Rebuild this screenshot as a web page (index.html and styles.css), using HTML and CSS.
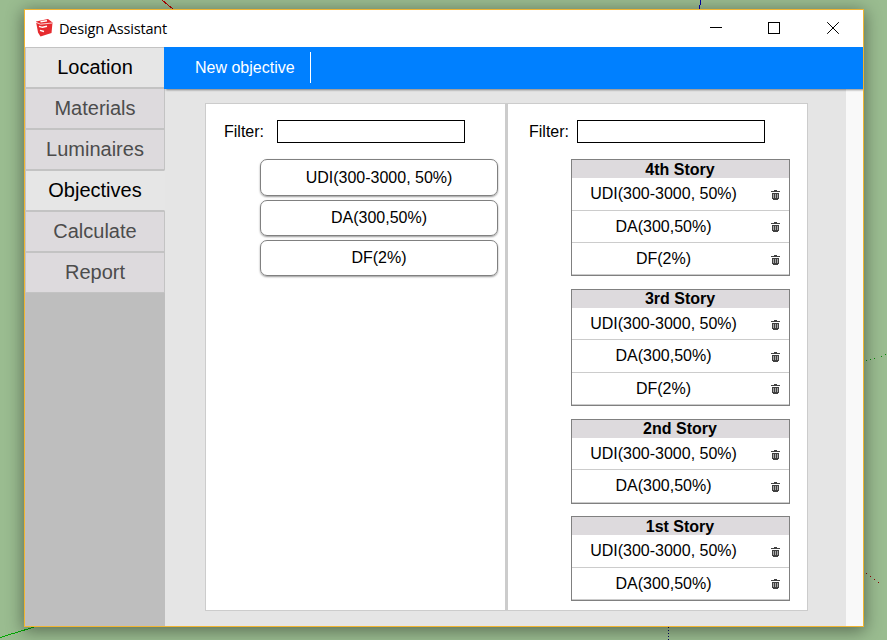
FILE: index.html
```html
<!DOCTYPE html>
<html lang="en">
<head>
<meta charset="utf-8">
<title>Design Assistant</title>
<link rel="stylesheet" href="styles.css">
</head>
<body>
<svg class="scene" width="887" height="640" viewBox="0 0 887 640" fill="none">
  <path d="M162 0 173 9" stroke="#b00000"/>
  <path d="M700.5 0V5M699.5 5V9" stroke="#0000a8"/>
  <path d="M0 637.5 36 626.5" stroke="#00a800"/>
  <path d="M866 360.5 887 354.5" stroke="#0a8a0a" stroke-dasharray="1 3"/>
  <path d="M866 573 887 590" stroke="#900000" stroke-dasharray="1 4"/>
  <path d="M668.5 627V640" stroke="#000060" stroke-dasharray="1 2"/>
</svg>
<svg width="0" height="0" class="symbols">
  <symbol id="trash" viewBox="0 0 9 10">
    <path d="M3 0h3v1h3v1H0V1h3zM1 3h7v6H7v1H2V9H1z" fill="#404040"/>
    <path d="M2.5 4v4M4.5 4v4M6.5 4v4" stroke="#c4c4c4" stroke-width=".8"/>
  </symbol>
</svg>
<div class="window">
  <header class="titlebar">
    <svg class="logo" width="17" height="18" viewBox="0 0 17 18">
      <path d="M0 2.500 12 0 16.500 3.500 15.500 14 4.500 17.500 2 13.500z" fill="#e62b2f"/>
      <path d="M0 3.300 4.500 5.200 16 4" fill="none" stroke="#fff" stroke-width=".8"/>
      <path d="M4.500 2.800 11 1.800M3 7.300 6.500 8.300 11 7.300M4 11.300 8 12.500" fill="none" stroke="#fff" stroke-width="1.400"/>
    </svg>
    <span class="title">Design Assistant</span>
    <svg class="controls" width="130" height="12" viewBox="0 0 130 12" fill="none" stroke="#000" shape-rendering="crispEdges">
      <path d="M0 5.500H12M58.500 .5H69.500V11.500H58.500z"/>
      <path d="M117.200 .2 128.800 11.800M128.800 .2 117.200 11.800" shape-rendering="auto"/>
    </svg>
  </header>
  <div class="body">
    <nav class="sidebar">
      <a class="tab location">Location</a>
      <a class="tab">Materials</a>
      <a class="tab">Luminaires</a>
      <a class="tab active">Objectives</a>
      <a class="tab">Calculate</a>
      <a class="tab">Report</a>
    </nav>
    <main class="main">
      <div class="toolbar"><span class="action">New objective</span></div>
      <div class="content">
        <div class="workspace">
          <section class="column available">
            <label class="filter">Filter:<input type="text"></label>
            <div class="buttons">
              <div class="objective">UDI(300-3000, 50%)</div>
              <div class="objective">DA(300,50%)</div>
              <div class="objective">DF(2%)</div>
            </div>
          </section>
          <section class="column assigned">
            <label class="filter">Filter:<input type="text"></label>
            <div class="groups">
              <div class="group">
                <h2>4th Story</h2>
                <div class="row"><span>UDI(300-3000, 50%)</span><svg class="trash"><use href="#trash"/></svg></div>
                <div class="row"><span>DA(300,50%)</span><svg class="trash"><use href="#trash"/></svg></div>
                <div class="row"><span>DF(2%)</span><svg class="trash"><use href="#trash"/></svg></div>
              </div>
              <div class="group">
                <h2>3rd Story</h2>
                <div class="row"><span>UDI(300-3000, 50%)</span><svg class="trash"><use href="#trash"/></svg></div>
                <div class="row"><span>DA(300,50%)</span><svg class="trash"><use href="#trash"/></svg></div>
                <div class="row"><span>DF(2%)</span><svg class="trash"><use href="#trash"/></svg></div>
              </div>
              <div class="group">
                <h2>2nd Story</h2>
                <div class="row"><span>UDI(300-3000, 50%)</span><svg class="trash"><use href="#trash"/></svg></div>
                <div class="row"><span>DA(300,50%)</span><svg class="trash"><use href="#trash"/></svg></div>
              </div>
              <div class="group">
                <h2>1st Story</h2>
                <div class="row"><span>UDI(300-3000, 50%)</span><svg class="trash"><use href="#trash"/></svg></div>
                <div class="row"><span>DA(300,50%)</span><svg class="trash"><use href="#trash"/></svg></div>
              </div>
            </div>
          </section>
        </div>
        <div class="gutter"></div>
      </div>
    </main>
  </div>
</div>
</body>
</html>
```
FILE: styles.css
```css
* { box-sizing: border-box; }
body {
  margin: 0;
  height: 640px;
  padding: 9px 0 0 24px;
  overflow: hidden;
  background: #9abc90;
  font: 16px/18px "Liberation Sans", Arial, sans-serif;
  color: #000;
}
.scene { position: absolute; left: 0; top: 0; shape-rendering: crispEdges; }
.symbols { position: absolute; }
.window {
  position: relative;
  width: 840px;
  height: 618px;
  display: flex;
  flex-direction: column;
  border: 1px solid #f0b432;
  background: #e5e5e5;
  box-shadow: 0 3px 16px 1px rgba(0, 0, 0, .42);
}
.titlebar {
  height: 37px;
  flex: none;
  display: flex;
  align-items: center;
  padding: 0 23px 2px 11px;
  background: #fff;
}
.title {
  margin: 2px 0 0 6px;
  font: 14.500px/20px "Open Sans", sans-serif;
  letter-spacing: -.16px;
}
.controls { margin-left: auto; }
.body { flex: 1; display: flex; min-height: 0; overflow: hidden; }
.sidebar { width: 140px; flex: none; background: #bebebe; }
.tab {
  display: block;
  height: 41px;
  border: 1px solid #c3c3c3;
  background: #dddadd;
  color: #4c4c4c;
  font-size: 20px;
  line-height: 39px;
  text-align: center;
}
.tab.location { background: #e6e6e6; color: #000; border-right: 0; padding-right: 1px; }
.tab.active { background: #e6e6e6; color: #000; border-right-color: #e6e6e6; }
.main { flex: 1; display: flex; flex-direction: column; min-width: 0; }
.toolbar {
  position: relative;
  height: 42px;
  flex: none;
  margin-left: -1px;
  padding: 5px 0 0 31px;
  background: #0080ff;
  color: #fff;
  box-shadow: 2px 1px 2px rgba(0, 0, 0, .45);
}
.action {
  display: inline-block;
  height: 31px;
  padding-right: 15px;
  border-right: 1px solid #fff;
  line-height: 31px;
}
.content { flex: 1; display: flex; }
.workspace {
  width: 603px;
  height: 508px;
  margin: 14px 0 0 40px;
  display: flex;
  border: 1px solid #ccc;
  background: #fff;
}
.gutter { width: 17px; margin-left: auto; background: #f9f9f9; }
.column { padding-top: 16px; }
.available { width: 302px; border-right: 3px solid #ccc; }
.assigned { flex: 1; }
.filter { display: flex; align-items: center; height: 23px; padding-left: 18px; }
.assigned .filter { padding-left: 21px; }
.filter input {
  width: 188px;
  height: 23px;
  margin: 0 0 0 13px;
  padding: 0 4px;
  border: 1px solid #000;
  border-radius: 0;
  background: #fff;
}
.assigned .filter input { margin-left: 8px; }
.buttons { margin: 16px 0 0 54px; display: grid; gap: 4px; }
.objective {
  width: 238px;
  height: 36px;
  border: 1px solid #808080;
  border-radius: 7px;
  box-shadow: 0 1px 2px rgba(0, 0, 0, .4);
  line-height: 34px;
  text-align: center;
}
.objective:first-child { height: 37px; line-height: 36px; }
.groups { margin: 16px 0 0 63px; display: grid; gap: 12.500px; }
.group { width: 219px; border: 1px solid #808080; }
.group h2 {
  height: 18.400px;
  margin: 0;
  padding: .6px 1px 0 0;
  background: #dddadd;
  font-size: 16px;
  line-height: 18px;
  text-align: center;
}
.row {
  height: 32.300px;
  display: flex;
  align-items: flex-start;
  border-bottom: 1px solid #ccc;
}
.row span { width: 183px; line-height: 32px; text-align: center; }
.trash { width: 9px; height: 10px; margin: 11.650px 0 0 16px; }
```
